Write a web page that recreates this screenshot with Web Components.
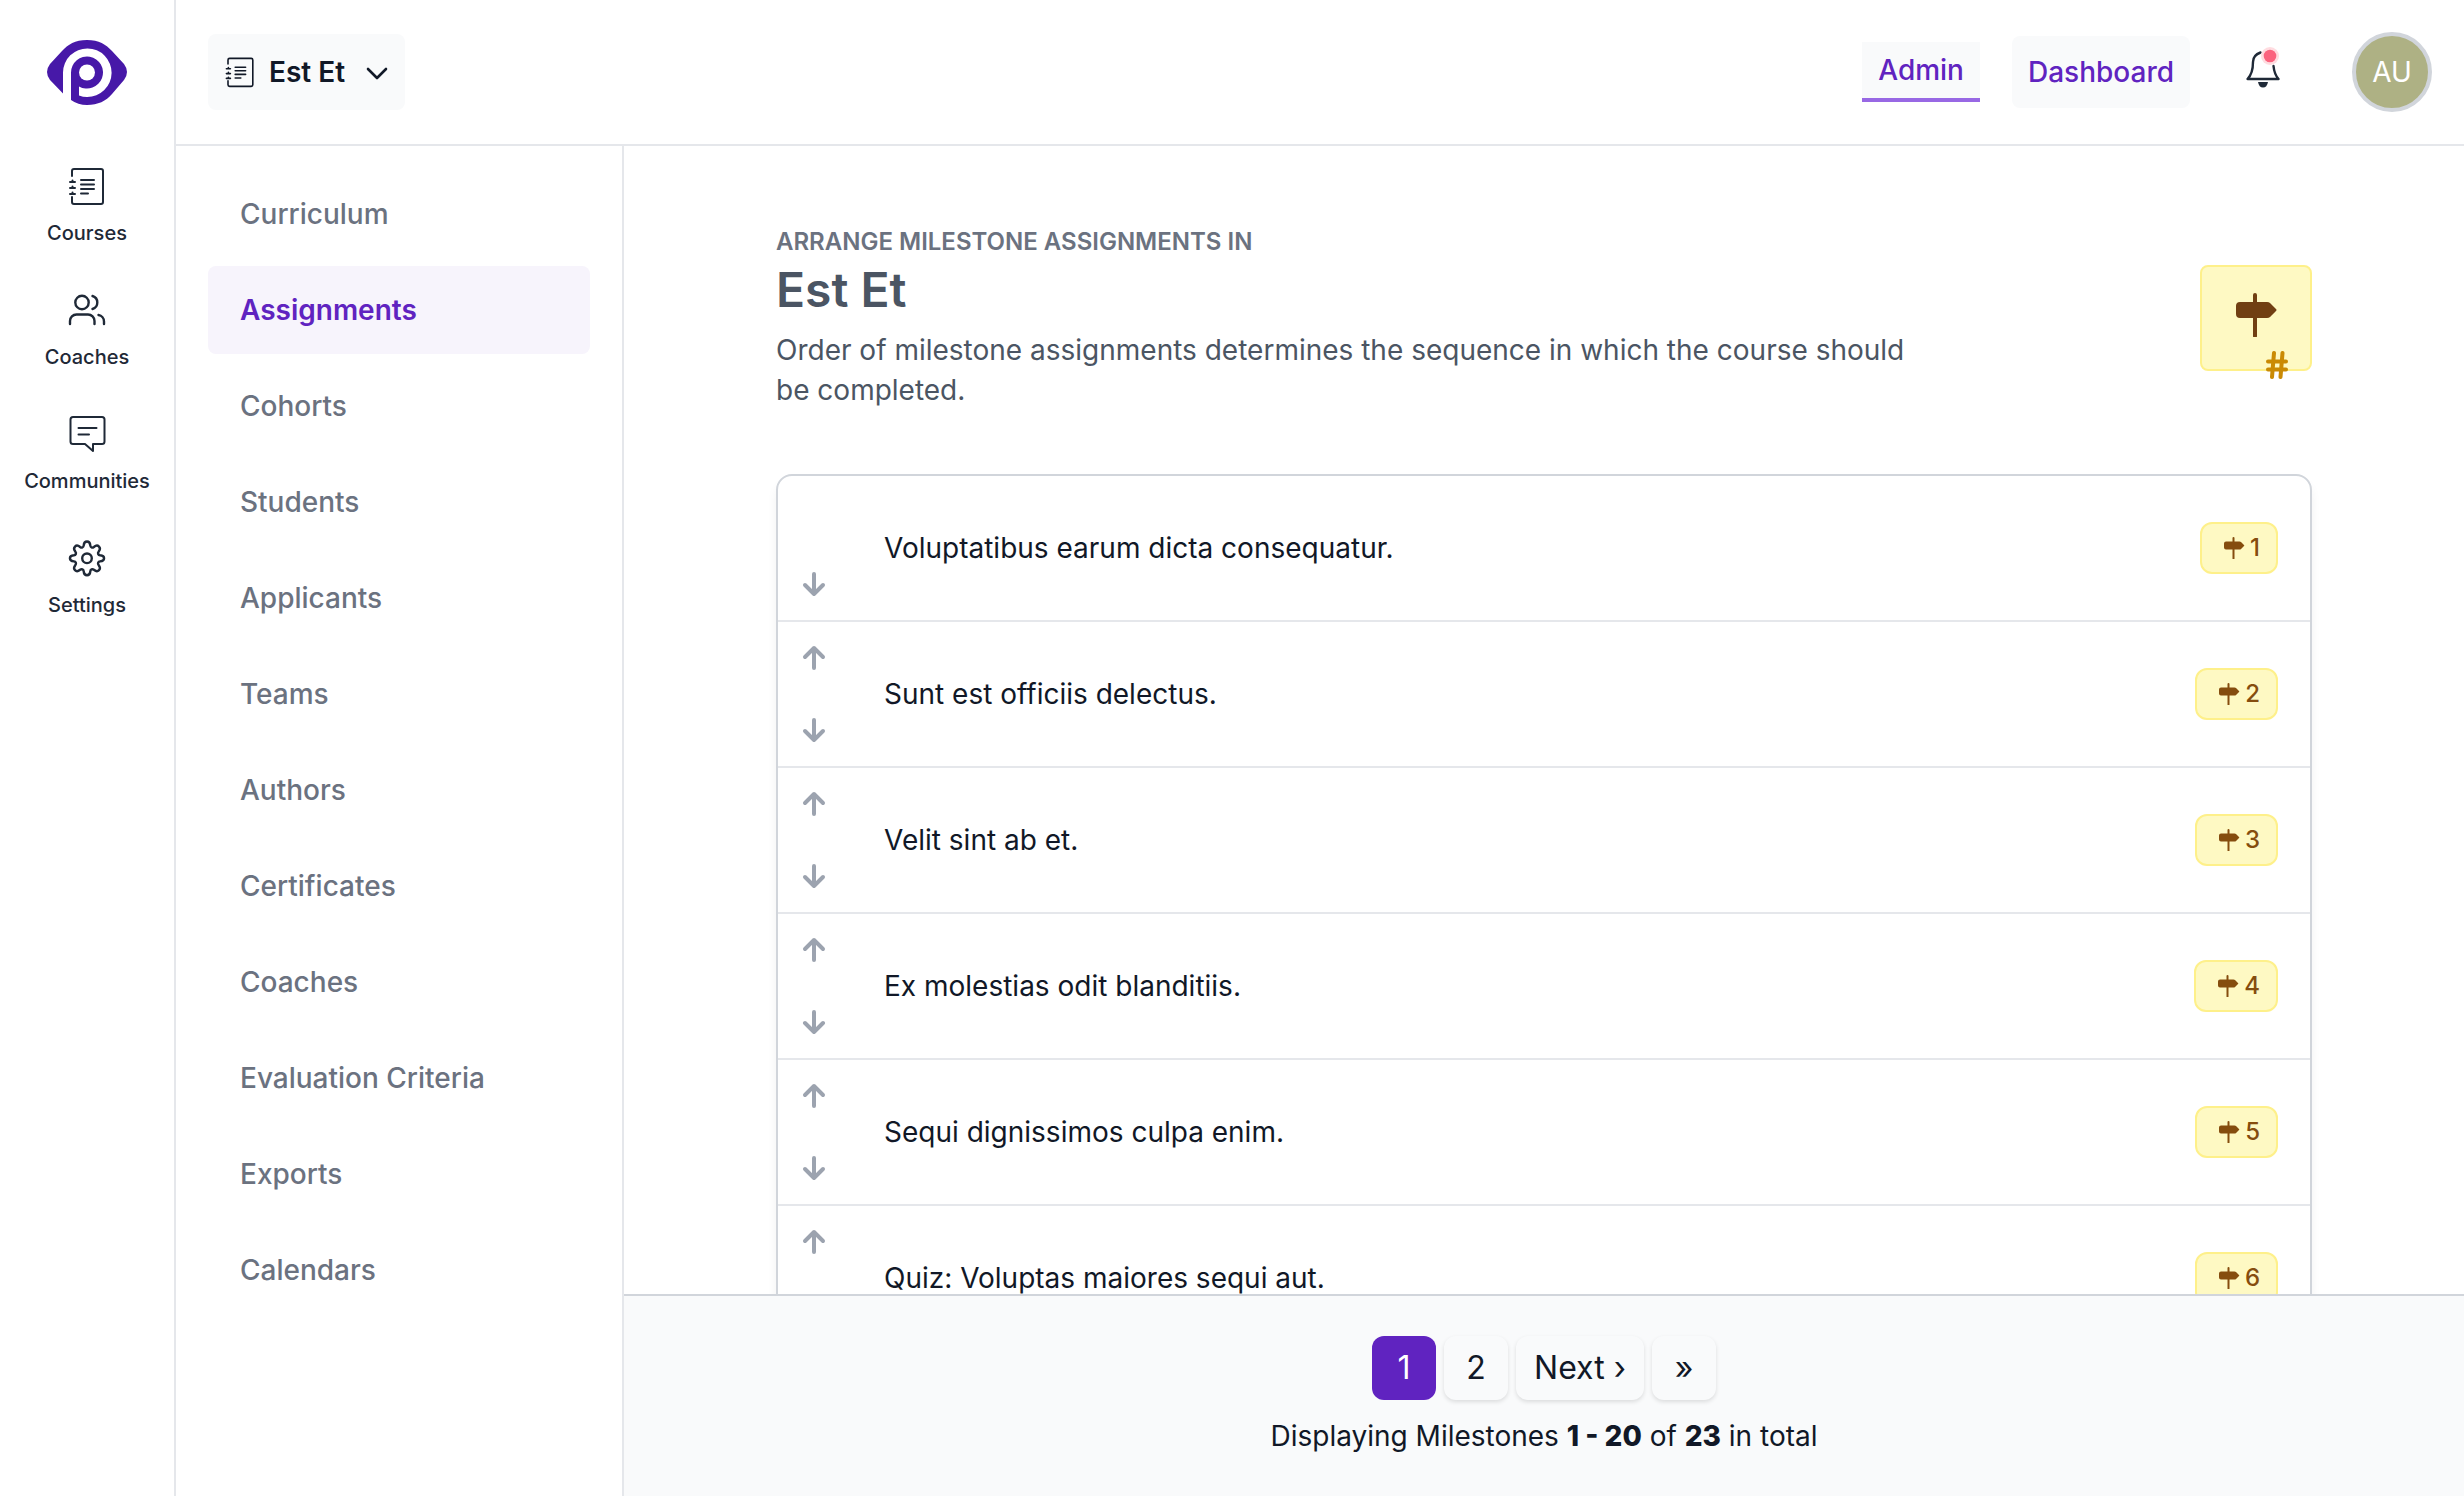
<!DOCTYPE html>
<html lang="en">
<head>
<meta charset="utf-8">
<title>Milestones - Est Et</title>
<style>
  html, body { margin: 0; height: 100%; background: #fff; }
  body { font-family: Inter, "Liberation Sans", sans-serif; font-size: 28px; line-height: 40px; color: #111827; }
</style>
</head>
<body>
<school-app>
  <icon-rail slot="rail">
    <rail-item icon="courses">Courses</rail-item>
    <rail-item icon="coaches">Coaches</rail-item>
    <rail-item icon="communities">Communities</rail-item>
    <rail-item icon="settings">Settings</rail-item>
  </icon-rail>
  <top-bar slot="top" course="Est Et"></top-bar>
  <side-menu slot="side">
    <menu-link>Curriculum</menu-link>
    <menu-link active>Assignments</menu-link>
    <menu-link>Cohorts</menu-link>
    <menu-link>Students</menu-link>
    <menu-link>Applicants</menu-link>
    <menu-link>Teams</menu-link>
    <menu-link>Authors</menu-link>
    <menu-link>Certificates</menu-link>
    <menu-link>Coaches</menu-link>
    <menu-link>Evaluation Criteria</menu-link>
    <menu-link>Exports</menu-link>
    <menu-link>Calendars</menu-link>
  </side-menu>
  <milestone-page>
    <page-heading>
      <span slot="eyebrow">Arrange milestone assignments in</span>
      <span slot="title">Est Et</span>
      Order of milestone assignments determines the sequence in which the course should be completed.
    </page-heading>
    <milestone-list>
      <milestone-row number="1" first>Voluptatibus earum dicta consequatur.</milestone-row>
      <milestone-row number="2">Sunt est officiis delectus.</milestone-row>
      <milestone-row number="3">Velit sint ab et.</milestone-row>
      <milestone-row number="4">Ex molestias odit blanditiis.</milestone-row>
      <milestone-row number="5">Sequi dignissimos culpa enim.</milestone-row>
      <milestone-row number="6">Quiz: Voluptas maiores sequi aut.</milestone-row>
    </milestone-list>
  </milestone-page>
  <page-footer slot="footer"></page-footer>
</school-app>

<script>
const BASE = `
  :host, *, *::before, *::after { box-sizing: border-box; }
  svg { display: block; flex: none; }
  a { color: inherit; text-decoration: none; }
  button { font: inherit; color: inherit; border: 0; background: none; padding: 0; margin: 0; cursor: pointer; }
`;

const NOTEBOOK = `
  <g fill="none" stroke="currentColor" stroke-linecap="round" stroke-linejoin="round" stroke-width="2">
    <path d="M5 10V5a2 2 0 0 1 2-2h27a2 2 0 0 1 2 2v31a2 2 0 0 1-2 2H7a2 2 0 0 1-2-2v-5"/>
    <path d="M14 14h13M14 18.500h13M14 23h13M14 27.500h7"/>
    <path d="M3 16h5M5.500 14.500v1M3 22h5M5.500 20.500v1M3 28h5M5.500 26.500v1"/>
  </g>`;

const ICONS = {
  courses: NOTEBOOK,
  coaches: `<g fill="none" stroke="currentColor" stroke-width="2.400" stroke-linecap="round" stroke-linejoin="round">
    <circle cx="15" cy="12.500" r="6.700"/><path d="M25.500 6a6.800 6.800 0 0 1 0 13"/>
    <path d="M3 34v-3a6.500 6.500 0 0 1 6.500-6.500h11.500a6.500 6.500 0 0 1 6.500 6.500v3M31.500 25a6.500 6.500 0 0 1 5.500 6.500v2.500"/></g>`,
  communities: `<g fill="none" stroke="currentColor" stroke-width="2" stroke-linecap="round" stroke-linejoin="round">
    <path d="M6 3h29a2.500 2.500 0 0 1 2.500 2.500v22a2.500 2.500 0 0 1-2.500 2.500h-9v7l-8-7H6a2.500 2.500 0 0 1-2.500-2.500v-22A2.500 2.500 0 0 1 6 3z"/>
    <path d="M11.500 14h18M11.500 20.500h10.500"/></g>`,
  settings: `<g fill="none" stroke="currentColor" stroke-width="2.400" stroke-linejoin="round">
    <path d="M16.700 7.500c.4-5.300 6.200-5.300 6.600 0 .2 2 2 2.700 3.600 1.500 4-3.400 8 .6 4.700 4.700-1.200 1.500-.5 3.300 1.500 3.500 5.300.4 5.300 5.800 0 6.200-2 .2-2.700 2-1.500 3.500 3.300 4.200-.6 8.200-4.700 4.900-1.600-1.200-3.400-.5-3.600 1.500-.4 5.200-6.200 5.200-6.600 0-.2-2-2-2.700-3.600-1.500-4.100 3.300-8-.7-4.700-4.900 1.200-1.500.5-3.300-1.500-3.500-5.300-.4-5.300-5.800 0-6.200 2-.2 2.700-2 1.500-3.500-3.300-4.100.7-8.100 4.700-4.700 1.600 1.200 3.400.5 3.600-1.500z"/>
    <circle cx="20" cy="20.300" r="4.800"/></g>`
};

const SIGN = `<path fill="currentColor" d="M18 2a2 2 0 0 1 4 0v7h10q2 0 3 1l6 6q1 1 0 2l-6 6q-1 1-3 1H22v18a2 2 0 0 1-4 0V25H5q-4 0-4-4v-8q0-4 4-4h13z"/>`;

function define(name, css, markup) {
  customElements.define(name, class extends HTMLElement {
    constructor() {
      super();
      this.attachShadow({ mode: 'open' });
    }
    connectedCallback() {
      const html = typeof markup === 'function' ? markup(this) : markup;
      this.shadowRoot.innerHTML = `<style>${BASE}${css}</style>${html}`;
    }
  });
}

define('school-app', `
  :host { display: flex; height: 100vh; overflow: hidden; }
  .column { flex: 1; min-width: 0; display: flex; flex-direction: column; }
  .body { flex: 1; min-height: 0; display: flex; }
  main { flex: 1; min-width: 0; display: flex; flex-direction: column; }
`, `
  <slot name="rail"></slot>
  <div class="column">
    <slot name="top"></slot>
    <div class="body">
      <slot name="side"></slot>
      <main><slot></slot><slot name="footer"></slot></main>
    </div>
  </div>`);

define('icon-rail', `
  :host { display: flex; flex-direction: column; align-items: center; flex: none; width: 176px; padding-top: 40px; border-right: 2px solid #e5e7eb; }
  nav { display: flex; flex-direction: column; align-items: center; gap: 42px; margin-top: 60px; }
`, `
  <a href="#" aria-label="Home">
    <svg width="80" height="66" viewBox="0 0 80 66">
      <path fill="#4718a8" d="M40 0C52 0 59 4.500 65 11L77 24Q83 32 77 40L65 54C59 61 51 65 40 65Q31 65 24 60V32.500A16 16 0 1 1 32 46.400V55.500Q36 57 40 57A24.300 24.300 0 1 0 16 32.500V53.500L3 40Q-3 32 3 24L15 11C21 4.500 28 0 40 0z"/>
      <circle cx="40" cy="32.500" r="8" fill="#fff"/>
    </svg>
  </a>
  <nav><slot></slot></nav>`);

define('rail-item', `
  :host { display: block; font-size: 20px; line-height: 30px; font-weight: 500; color: #1f2937; }
  a { display: flex; flex-direction: column; align-items: center; gap: 12px; }
`, el => `<a href="#"><svg width="40" height="40" viewBox="0 0 40 40" aria-hidden="true">${ICONS[el.getAttribute('icon')]}</svg><span><slot></slot></span></a>`);

define('top-bar', `
  :host { display: flex; align-items: center; justify-content: space-between; flex: none; height: 146px; padding: 0 32px; border-bottom: 2px solid #e5e7eb; }
  .course { display: flex; align-items: center; height: 76px; padding: 0 16px; border-radius: 8px; background: #f9fafb; font-weight: 600; }
  .course span { margin: 0 20px 0 13px; }
  .right { display: flex; align-items: center; }
  .right a { padding: 8px 16px; background: #f9fafb; color: #6023c0; font-weight: 500; }
  .right a.current { border-bottom: 4px solid #9868e4; margin-right: 32px; }
  .right a.plain { padding: 16px; border-radius: 8px; }
  .bell { margin: 0 68px 0 52px; }
  .avatar { display: flex; align-items: center; justify-content: center; width: 80px; height: 80px; border: 4px solid #d1d5db; border-radius: 50%; background: #aeb184; color: #fff; }
`, el => `
  <button class="course">
    <svg width="32" height="32" viewBox="0 0 40 40" aria-hidden="true">${NOTEBOOK}</svg>
    <span>${el.getAttribute('course')}</span>
    <svg width="24" height="24" viewBox="0 0 24 24" aria-hidden="true"><path d="M3 9l9 9 9-9" fill="none" stroke="currentColor" stroke-width="2.600" stroke-linecap="round" stroke-linejoin="round"/></svg>
  </button>
  <div class="right">
    <a class="current" href="#">Admin</a>
    <a class="plain" href="#">Dashboard</a>
    <button class="bell" aria-label="Notifications">
      <svg width="42" height="52" viewBox="0 0 42 52">
        <path d="M18.500 6.500C13 8.500 11 11.500 11 16C11 24 9.500 29 5.500 33H36.500C33 29 32 25 31.500 20" fill="none" stroke="#1f2937" stroke-width="2.400" stroke-linecap="round" stroke-linejoin="round"/>
        <path fill="#1f2937" d="M16 36h10q-1 5.500-5 5.500t-5-5.500z"/>
        <circle cx="28" cy="10" r="9" fill="#ffdce0"/><circle cx="28" cy="10" r="6.300" fill="#fb637e"/>
      </svg>
    </button>
    <button class="avatar" aria-label="Account">AU</button>
  </div>`);

define('side-menu', `
  :host { display: block; flex: none; width: 448px; padding: 24px 32px; border-right: 2px solid #e5e7eb; }
  nav { display: flex; flex-direction: column; gap: 8px; }
`, `<nav><slot></slot></nav>`);

define('menu-link', `
  :host { display: block; font-weight: 500; color: #6b7280; border-radius: 8px; }
  :host([active]) { font-weight: 600; color: #6023c0; background: #f7f4fc; }
  a { display: block; padding: 24px 32px; }
`, `<a href="#"><slot></slot></a>`);

define('milestone-page', `
  :host { display: block; flex: 1; min-height: 0; overflow-y: auto; scrollbar-width: none; padding: 80px 32px 0; }
  section { max-width: 1536px; margin: 0 auto; }
`, `<section><slot></slot></section>`);

define('page-heading', `
  :host { display: flex; align-items: center; justify-content: space-between; }
  .text { max-width: 1152px; }
  .eyebrow { font-size: 24px; line-height: 32px; font-weight: 600; text-transform: uppercase; color: #6b7280; }
  h1 { margin: 0; font-size: 48px; line-height: 64px; font-weight: 600; color: #4b5563; }
  p { margin: 8px 0 0; color: #4b5563; }
  .tile { position: relative; display: flex; align-items: center; justify-content: center; width: 112px; height: 106px; padding-bottom: 6px; border: 2px solid #fef08a; border-radius: 8px; background: #fef9c3; color: #713f12; }
  .hash { position: absolute; left: 64px; bottom: -10px; color: #ca8a04; }
`, `
  <div class="text">
    <div class="eyebrow"><slot name="eyebrow"></slot></div>
    <h1><slot name="title"></slot></h1>
    <p><slot></slot></p>
  </div>
  <div class="tile" aria-hidden="true">
    <svg width="42" height="44" viewBox="0 0 42 44">${SIGN}</svg>
    <svg class="hash" width="22" height="28" viewBox="0 0 22 28"><path d="M8 2L6 26M16.500 2L14.500 26M2 10.500H20M2 18.500H20" fill="none" stroke="currentColor" stroke-width="4" stroke-linecap="round"/></svg>
  </div>`);

define('milestone-list', `
  :host { display: block; margin-top: 64px; border: 2px solid #d1d5db; border-radius: 16px; background: #fff; box-shadow: 0 8px 12px -2px rgba(0,0,0,.08); }
`, `<slot></slot>`);

define('milestone-row', `
  :host { display: flex; align-items: center; height: 146px; border-bottom: 2px solid #e5e7eb; padding-right: 32px; }
  .move { display: flex; flex-direction: column; justify-content: space-between; align-self: stretch; padding: 20px 24px; color: #9ca3af; }
  :host([first]) .up { visibility: hidden; }
  .name { flex: 1; margin-left: 34px; }
  .badge { display: flex; align-items: center; height: 52px; padding: 0 16px; border: 2px solid #fef08a; border-radius: 12px; background: #fef9c3; color: #854d0e; font-size: 24px; line-height: 32px; font-weight: 500; }
  .badge svg { margin: 0 5px; }
`, el => `
  <div class="move">
    <button class="up" aria-label="Move up"><svg width="24" height="32" viewBox="0 0 24 32"><path d="M12 26V6M3 15L12 6l9 9" fill="none" stroke="currentColor" stroke-width="4" stroke-linecap="round" stroke-linejoin="round"/></svg></button>
    <button aria-label="Move down"><svg width="24" height="32" viewBox="0 0 24 32"><path d="M12 6V26M3 17L12 26l9-9" fill="none" stroke="currentColor" stroke-width="4" stroke-linecap="round" stroke-linejoin="round"/></svg></button>
  </div>
  <div class="name"><slot></slot></div>
  <div class="badge"><svg width="22" height="22" viewBox="0 0 42 44" aria-hidden="true">${SIGN}</svg><span>${el.getAttribute('number')}</span></div>`);

define('page-footer', `
  :host { display: flex; flex-direction: column; align-items: center; gap: 16px; flex: none; padding: 40px 32px; border-top: 2px solid #d1d5db; background: #f9fafb; }
  nav { display: flex; gap: 8px; font-size: 32px; }
  nav a { display: flex; align-items: center; justify-content: center; min-width: 64px; height: 64px; padding: 0 18px; border-radius: 12px; box-shadow: 0 2px 4px rgba(0,0,0,.12); }
  nav a.current { background: #6023c0; color: #fff; box-shadow: none; }
  b { font-weight: 800; }
`, `
  <nav aria-label="Pages"><a class="current" href="#">1</a><a href="#">2</a><a href="#">Next ›</a><a href="#">»</a></nav>
  <div>Displaying Milestones <b>1 - 20</b> of <b>23</b> in total</div>`);
</script>
</body>
</html>
